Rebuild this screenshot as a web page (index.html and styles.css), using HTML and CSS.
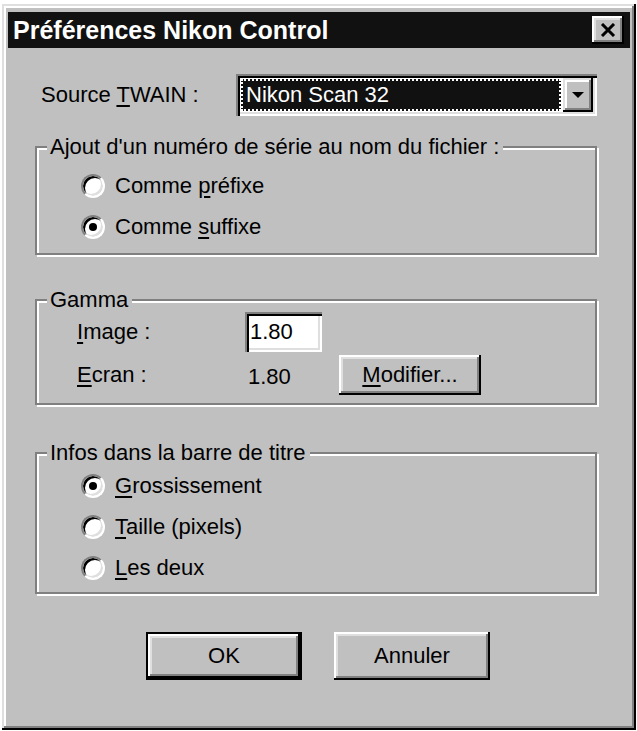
FILE: index.html
```html
<!DOCTYPE html>
<html>
<head>
  <meta charset="utf-8">
  <title>Préférences Nikon Control</title>
  <link rel="stylesheet" href="styles.css">
</head>
<body>
  <div class="window">
    <div class="titlebar">
      <span class="title">Préférences Nikon Control</span>
      <span class="close">
        <svg width="16" height="14" viewBox="0 0 16 14"><path d="M2 1 L14 13 M14 1 L2 13" stroke="#000" stroke-width="3" fill="none"/></svg>
      </span>
    </div>
    <div class="dialog">
      <div class="source-row">
        <span class="label">Source <u>T</u>WAIN :</span>
        <div class="combo">
          <div class="combo-value"><span class="selected">Nikon Scan 32</span></div>
          <div class="combo-button">
            <svg width="12" height="7" viewBox="0 0 12 7"><polygon points="0,0 12,0 6,6" fill="#000"/></svg>
          </div>
        </div>
      </div>

      <div class="group group-serial">
        <div class="group-title">Ajout d'un numéro de série au nom du fichier :</div>
        <div class="options">
          <div class="option"><span class="radio"></span><span>Comme <u>p</u>réfixe</span></div>
          <div class="option"><span class="radio checked"></span><span>Comme <u>s</u>uffixe</span></div>
        </div>
      </div>

      <div class="group group-gamma">
        <div class="group-title">Gamma</div>
        <div class="gamma-row">
          <span class="gamma-label"><u>I</u>mage :</span>
          <div class="textfield">1.80</div>
        </div>
        <div class="gamma-row second">
          <span class="gamma-label"><u>E</u>cran :</span>
          <span class="gamma-value">1.80</span>
          <div class="button modify"><u>M</u>odifier...</div>
        </div>
      </div>

      <div class="group group-title-info">
        <div class="group-title">Infos dans la barre de titre</div>
        <div class="options">
          <div class="option"><span class="radio checked"></span><span><u>G</u>rossissement</span></div>
          <div class="option"><span class="radio"></span><span><u>T</u>aille (pixels)</span></div>
          <div class="option"><span class="radio"></span><span><u>L</u>es deux</span></div>
        </div>
      </div>

      <div class="actions">
        <div class="default-frame"><div class="button">OK</div></div>
        <div class="button cancel">Annuler</div>
      </div>
    </div>
  </div>
</body>
</html>
```

FILE: styles.css
```css
/* page */
body {
  margin: 0;
  padding: 4px 1px 0 2px;
  background: #fff;
  font-family: "Liberation Sans", Arial, sans-serif;
  font-size: 22px;
  color: #000;
}

u {
  text-decoration: underline;
  text-decoration-thickness: 2px;
  text-underline-offset: 3px;
}

/* window frame */
.window {
  width: 634px;
  height: 726px;
  box-sizing: border-box;
  padding: 8px 6px 4px 6px;
  background: #c0c0c0;
  box-shadow: inset -2px -2px 0 #000, inset 2px 2px 0 #dfdfdf,
              inset -4px -4px 0 #808080, inset 4px 4px 0 #fff;
}

.titlebar {
  height: 36px;
  display: flex;
  align-items: center;
  justify-content: space-between;
  padding: 0 6px 0 5px;
  background: #111;
  color: #fff;
  font-weight: bold;
  font-size: 25px;
}

.close {
  width: 32px;
  height: 28px;
  display: flex;
  align-items: center;
  justify-content: center;
  background: #c0c0c0;
  box-shadow: inset -2px -2px 0 #000, inset 2px 2px 0 #fff,
              inset -4px -4px 0 #808080, inset 4px 4px 0 #dfdfdf;
}

/* dialog body */
.dialog {
  padding: 26px 33px 0 27px;
}

.source-row {
  height: 42px;
  display: flex;
  align-items: center;
  justify-content: space-between;
  padding-left: 6px;
}

.combo {
  width: 361px;
  height: 42px;
  box-sizing: border-box;
  padding: 4px;
  display: flex;
  background: #fff;
  box-shadow: inset 2px 2px 0 #808080, inset 4px 4px 0 #000,
              inset -2px -2px 0 #fff, inset -4px -4px 0 #dfdfdf;
}

.combo-value {
  flex: 1;
  padding: 1px 2px 1px 1px;
  display: flex;
}

.selected {
  flex: 1;
  display: flex;
  align-items: center;
  padding-left: 5px;
  background: #111;
  color: #fff;
  outline: 2px dotted #fff;
  outline-offset: -2px;
}

.combo-button {
  width: 30px;
  display: flex;
  align-items: center;
  justify-content: center;
  background: #c0c0c0;
  box-shadow: inset -2px -2px 0 #000, inset 2px 2px 0 #dfdfdf,
              inset -4px -4px 0 #808080, inset 4px 4px 0 #fff;
}

/* group boxes */
.group {
  border: 2px solid #808080;
  box-shadow: inset 2px 2px 0 #fff, 2px 2px 0 #fff;
}

.group-title {
  width: fit-content;
  margin: -13px 0 0 10px;
  padding: 0 4px 0 3px;
  line-height: 24px;
  background: #c0c0c0;
}

.group-serial {
  margin-top: 30px;
  padding-bottom: 6px;
}

.group-serial .options {
  padding-top: 6px;
}

.group-gamma {
  margin-top: 44px;
  padding-bottom: 8px;
}

.group-title-info {
  margin-top: 47px;
  padding-bottom: 4px;
}

.option {
  height: 41px;
  display: flex;
  align-items: center;
  gap: 10px;
  padding-left: 44px;
}

.radio {
  width: 24px;
  height: 24px;
  flex: none;
  box-sizing: border-box;
  border-radius: 50%;
  border: 2px solid;
  border-color: #808080 #fff #fff #808080;
  background: #fff;
  box-shadow: inset 2px 2px 0 #000, inset -2px -2px 0 #dfdfdf;
  display: flex;
  align-items: center;
  justify-content: center;
}

.radio.checked::after {
  content: "";
  width: 8px;
  height: 8px;
  border-radius: 50%;
  background: #000;
}

/* gamma rows */
.gamma-row {
  height: 40px;
  display: flex;
  align-items: center;
  padding-left: 40px;
}

.gamma-row.second {
  margin-top: 3px;
}

.gamma-label {
  width: 168px;
}

.gamma-value {
  width: 91px;
  padding-left: 3px;
  padding-top: 4px;
}

.textfield {
  width: 77px;
  height: 40px;
  box-sizing: border-box;
  padding-left: 5px;
  display: flex;
  align-items: center;
  background: #fff;
  box-shadow: inset 2px 2px 0 #808080, inset 4px 4px 0 #000,
              inset -2px -2px 0 #fff, inset -4px -4px 0 #dfdfdf;
}

/* buttons */
.button {
  height: 48px;
  box-sizing: border-box;
  display: flex;
  align-items: center;
  justify-content: center;
  background: #c0c0c0;
  box-shadow: inset -2px -2px 0 #000, inset 2px 2px 0 #fff,
              inset -4px -4px 0 #808080, inset 4px 4px 0 #dfdfdf;
}

.button.modify {
  width: 142px;
  height: 40px;
}

.actions {
  margin-top: 38px;
  display: flex;
  gap: 32px;
  padding-left: 111px;
}

.default-frame {
  width: 156px;
  height: 48px;
  box-sizing: border-box;
  border: 2px solid #000;
}

.default-frame .button {
  height: 44px;
}

.button.cancel {
  width: 156px;
}
```
